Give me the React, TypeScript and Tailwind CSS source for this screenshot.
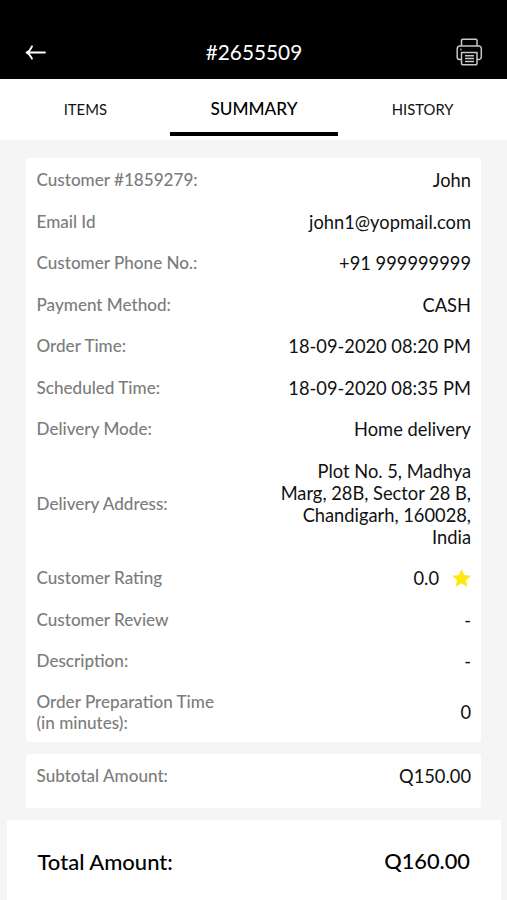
import { ReactNode } from "react";

const tabs = ["ITEMS", "SUMMARY", "HISTORY"];
const activeTab = "SUMMARY";

const App = () => {
    return (
        <div className="flex h-[900px] w-[507px] flex-col overflow-hidden bg-[#f5f5f5] font-['Lato',sans-serif] text-[#111]">
            {/* Header */}
            <header className="flex h-[79px] shrink-0 items-center justify-between bg-black pt-[25px] pr-[24px] pl-[25px] text-white">
                <button aria-label="Back" className="w-[27px]">
                    <BackIcon />
                </button>
                <h1 className="text-[20.8px] leading-[26px]">#2655509</h1>
                <button aria-label="Print" className="w-[27px]">
                    <PrinterIcon />
                </button>
            </header>

            {/* Tabs */}
            <nav className="grid h-[61px] shrink-0 grid-cols-3 bg-white pl-px">
                {tabs.map((tab) => (
                    <button
                        key={tab}
                        className={`mb-[4px] flex items-center justify-center border-b-4 pt-[7px] ${tab === activeTab
                            ? "border-black text-[17.2px] font-medium text-black"
                            : "border-transparent text-[14.8px]"
                            }`}
                    >
                        {tab}
                    </button>
                ))}
            </nav>

            {/* Order details */}
            <section className="mx-[26px] mt-[18px] flex h-[584px] shrink-0 flex-col gap-[19.5px] rounded-[2px] bg-white pt-[11px] pr-[10px] pl-[10.5px]">
                <Row label="Customer #1859279:">John</Row>
                <Row label="Email Id">john1@yopmail.com</Row>
                <Row label="Customer Phone No.:">+91 999999999</Row>
                <Row label="Payment Method:">CASH</Row>
                <Row label="Order Time:">18-09-2020 08:20 PM</Row>
                <Row label="Scheduled Time:">18-09-2020 08:35 PM</Row>
                <Row label="Delivery Mode:">Home delivery</Row>
                <Row label="Delivery Address:">
                    Plot No. 5, Madhya
                    <br />
                    Marg, 28B, Sector 28 B,
                    <br />
                    Chandigarh, 160028,
                    <br />
                    India
                </Row>
                <Row label="Customer Rating">
                    <span className="flex items-center gap-[13px]">
                        0.0
                        <StarIcon />
                    </span>
                </Row>
                <Row label="Customer Review">-</Row>
                <Row label="Description:">-</Row>
                <Row
                    label={
                        <>
                            Order Preparation Time
                            <br />
                            (in minutes):
                        </>
                    }
                >
                    0
                </Row>
            </section>

            {/* Subtotal */}
            <section className="mx-[26px] mt-[12px] h-[54px] shrink-0 rounded-[2px] bg-white pt-[10.8px] pr-[10px] pl-[10.5px]">
                <Row label="Subtotal Amount:">Q150.00</Row>
            </section>

            {/* Total */}
            <footer className="mr-[6px] ml-[7px] mt-[12px] flex flex-1 items-center justify-between rounded-t-[2px] bg-white pt-[2px] pr-[31px] pl-[30.5px] font-medium text-black">
                <span className="text-[22px]">Total Amount:</span>
                <span className="text-[21.8px]">Q160.00</span>
            </footer>
        </div>
    );
};

// Helper Components
const Row = ({ label, children }: { label: ReactNode; children: ReactNode }) => (
    <div className="flex items-center justify-between">
        <div className="pt-[0.8px] text-[17.1px] leading-[20.4px] font-medium text-[#7c7c7c]">{label}</div>
        <div className="text-right text-[18.3px] leading-[22px]">{children}</div>
    </div>
);

const BackIcon = () => (
    <svg width="21" height="16" viewBox="0 0 21 16" fill="none" stroke="currentColor" strokeWidth="1.8" strokeLinecap="round" strokeLinejoin="round">
        <path d="M20 8.5H1.5M7 2.3C5.8 5.1 4.2 7.3 1.5 8.5C4.2 9.7 5.8 11.9 7 14.7" />
    </svg>
);

const PrinterIcon = () => (
    <svg width="27" height="28" viewBox="0 0 27 28" fill="none" stroke="#c8c8c8" strokeWidth="1.5" strokeLinejoin="round">
        <path d="M5.5 8V2.5a1.2 1.2 0 0 1 1.2-1.2h13.1A1.2 1.2 0 0 1 21 2.5V8" />
        <path d="M5.5 21.5H3.8A2.6 2.6 0 0 1 1.2 18.9V10.6A2.6 2.6 0 0 1 3.8 8H22.7A2.6 2.6 0 0 1 25.3 10.6V18.9A2.6 2.6 0 0 1 22.7 21.5H21" />
        <path d="M5.5 14.5H21V25.5A1.2 1.2 0 0 1 19.8 26.7H6.7A1.2 1.2 0 0 1 5.5 25.5Z" />
        <path d="M9 17.8H18M9 20.6H18M9 23.4H18M4.2 11.5H5.6" />
    </svg>
);

const StarIcon = () => (
    <svg width="19" height="18" viewBox="0 0 19 18" fill="#fde910">
        <path d="M9.5 0L12.2 5.9L19 6.7L14 11.2L15.3 17.8L9.5 14.5L3.7 17.8L5 11.2L0 6.7L6.8 5.9Z" />
    </svg>
);

export default App;
